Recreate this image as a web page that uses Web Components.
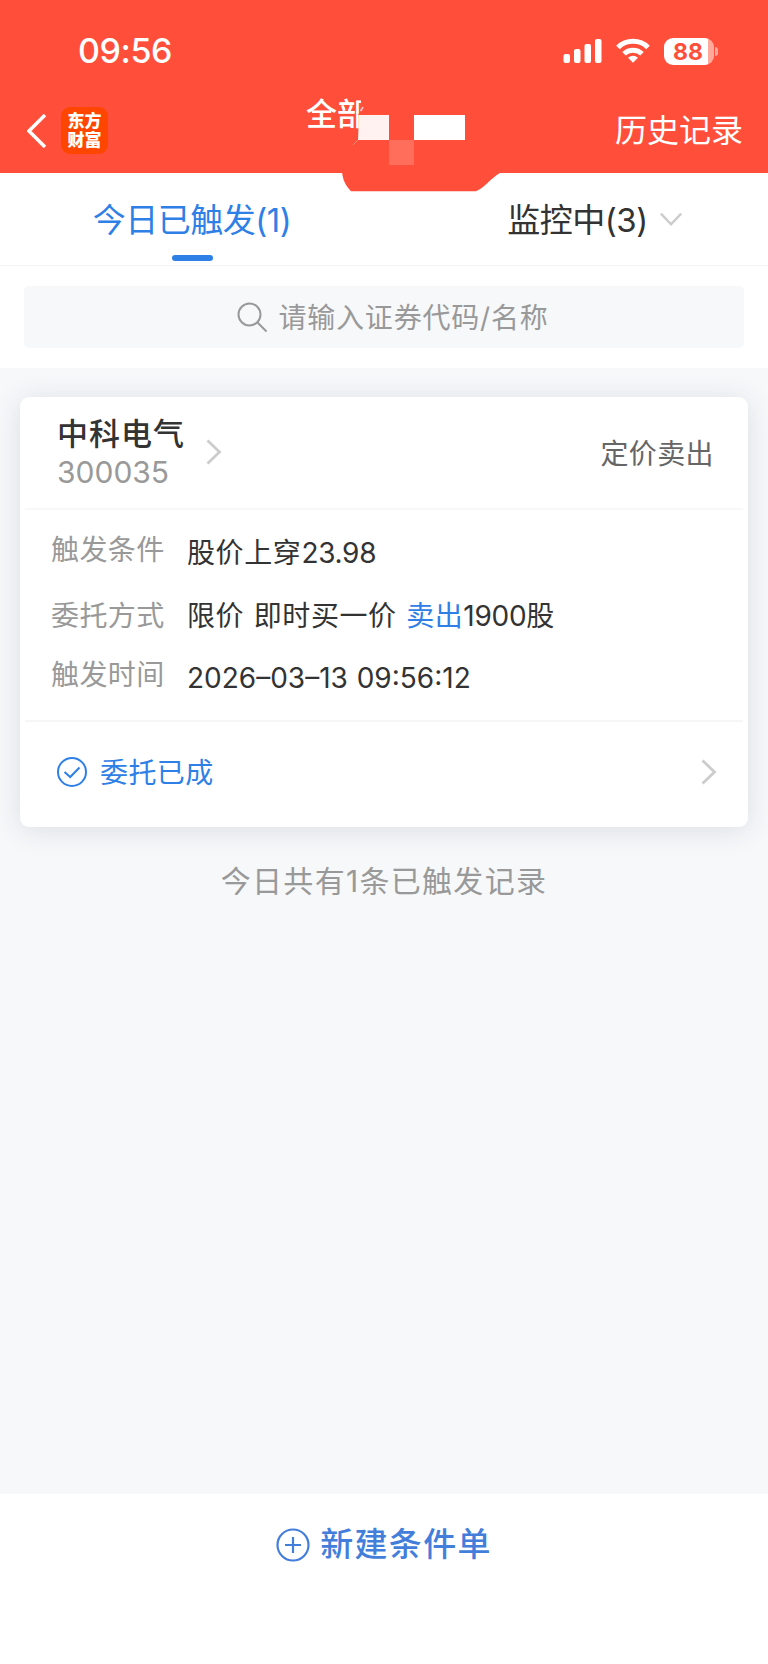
<!DOCTYPE html>
<html lang="zh-CN">
<head>
<meta charset="utf-8">
<meta name="viewport" content="width=device-width">
<title>条件单</title>
<style>
    body {
        margin: 0;
        background: #f7f8fa;
        font-family: Inter, "Noto Sans CJK SC", sans-serif;
        color: #333;
    }
</style>
</head>
<body>
<orders-page></orders-page>

<script>
(function () {
    function define(name, html) {
        const tmpl = document.createElement('template');
        tmpl.innerHTML = html;
        customElements.define(name, class extends HTMLElement {
            constructor() {
                super();
                this.attachShadow({mode: 'open'}).appendChild(tmpl.content.cloneNode(true));
            }
        });
    }

    define('status-bar', `
        <style>
            :host {
                display: flex;
                align-items: center;
                justify-content: space-between;
                height: 102px;
                padding: 0 50px 0 78px;
                box-sizing: border-box;
                color: #fff;
            }
            .time { font-size: 34px; font-weight: 500; line-height: 40px; letter-spacing: -0.4px; }
            .icons { display: flex; align-items: center; }
            .wifi { margin: 0 14px 0 13px; }
            .battery { display: flex; align-items: center; }
            .level {
                width: 50px;
                height: 27px;
                border-radius: 9px;
                background: linear-gradient(90deg, #fff 44px, #ffa89b 44px);
                color: #ff4f3a;
                font-size: 23px;
                font-weight: 700;
                line-height: 28px;
                text-indent: 9px;
            }
            .nub { width: 3px; height: 9px; margin-left: 1px; border-radius: 0 4px 4px 0; background: #ffa89b; }
        </style>
        <span class="time">09:56</span>
        <div class="icons">
            <svg width="40" height="26" viewBox="0 0 40 26" fill="#fff">
                <rect x="0.5" y="16" width="6.5" height="9" rx="2"/>
                <rect x="11" y="11" width="6.5" height="14" rx="2"/>
                <rect x="21.5" y="6" width="6.5" height="19" rx="2"/>
                <rect x="32" y="1" width="6.5" height="24" rx="2"/>
            </svg>
            <svg class="wifi" width="34" height="26" viewBox="0 0 34 26" fill="none" stroke="#fff" stroke-width="5">
                <path d="M2 9.5C10 1.3 24 1.3 32 9.5"/>
                <path d="M8 15.8C13 11 21 11 26 15.8"/>
                <path d="M17 24.7L12 19.7Q17 15.8 22 19.7Z" fill="#fff" stroke="none"/>
            </svg>
            <div class="battery"><div class="level">88</div><div class="nub"></div></div>
        </div>
    `);

    define('nav-bar', `
        <style>
            :host {
                display: grid;
                grid-template-columns: 27px 34px 245px 1fr auto;
                height: 71px;
                color: #fff;
            }
            .back { grid-column: 2; margin-top: 11px; }
            .logo {
                display: flex;
                flex-direction: column;
                align-items: center;
                justify-content: center;
                width: 47px;
                height: 47px;
                margin-top: 5px;
                border-radius: 9px;
                background: #ff4600;
                font: 900 17px/19px "Liberation Sans", "Noto Sans CJK SC", sans-serif;
            }
            .title { position: relative; font-size: 31px; font-weight: 500; line-height: 44px; margin-top: -10px; }
            /* mosaic over the account name, spills below the bar */
            .mosaic { position: absolute; left: 36px; top: 4px; }
            .action { margin: 5px 25px 0 0; font-size: 32px; line-height: 47px; }
        </style>
        <svg class="back" width="24" height="36" viewBox="0 0 24 36" fill="none" stroke="#fff" stroke-width="3.5">
            <path d="M18 2L2 18L18 34"/>
        </svg>
        <div class="logo"><div>东方</div><div>财富</div></div>
        <div class="title">全部
            <svg class="mosaic" width="170" height="96" viewBox="342 96 170 96">
                <path d="M361 96H373V115H358L361 110Z" fill="#ff4f3a"/>
                <path d="M342 172C343 181 346 186 351 191.300H476C484 188 490 179 500 173V172Z" fill="#ff4f3a"/>
                <path d="M359 115H389V140H358Z" fill="#fff2f1"/>
                <path d="M363 107L361 111" stroke="#ffd0c9" stroke-width="1.500"/>
                <rect x="389" y="140" width="25" height="25" fill="#ff6d5b"/>
                <path d="M414 115H465V140H414Z" fill="#fff"/>
                <path d="M353 145L358 140" stroke="#ff8a7c"/>
            </svg>
        </div>
        <div class="action"><slot></slot></div>
    `);

    define('tab-item', `
        <style>
            :host {
                position: relative;
                display: flex;
                justify-content: center;
                align-items: center;
                padding-top: 2px;
                font-size: 33px;
                line-height: 48px;
                letter-spacing: -0.5px;
                box-sizing: border-box;
            }
            :host([active]) { color: #2f80e6; }
            :host([active])::after {
                content: "";
                position: absolute;
                left: 172px;
                bottom: 4px;
                width: 41px;
                height: 6px;
                border-radius: 3px;
                background: #2f80e6;
            }
        </style>
        <slot></slot>
    `);

    define('search-box', `
        <style>
            :host {
                display: flex;
                justify-content: center;
                align-items: center;
                gap: 10px;
                height: 62px;
                padding: 2px 0 0 18px;
                box-sizing: border-box;
                border-radius: 5px;
                background: #f7f8fa;
                color: #999;
                font-size: 28px;
                line-height: 40px;
                letter-spacing: 0.8px;
            }
            svg { margin-top: -2px; }
        </style>
        <svg width="31" height="31" viewBox="0 0 31 31" fill="none" stroke="#999" stroke-width="2">
            <circle cx="12.500" cy="12.500" r="11"/><path d="M20.500 20.500L29.500 29.500"/>
        </svg>
        <span><slot></slot></span>
    `);

    define('arrow-icon', `
        <style>
            :host { display: block; line-height: 0; }
            :host([down]) { transform: rotate(90deg); }
        </style>
        <svg width="16" height="26" viewBox="0 0 16 26" fill="none" stroke="#ccc" stroke-width="2.800">
            <path d="M1.500 1.500L13.500 13L1.500 24.500"/>
        </svg>
    `);

    define('order-field', `
        <style>
            :host { display: flex; height: 40px; font-size: 28px; line-height: 40px; }
            .label { width: 136px; color: #999; letter-spacing: 0.4px; margin-top: var(--label-shift, 0); }
            .value { color: #333; white-space: pre; letter-spacing: 0.6px; word-spacing: 1px; }
            ::slotted(b) { color: #2f80e6; font-weight: 400; }
            ::slotted(i) { font-style: normal; letter-spacing: -0.3px; }
            ::slotted(time) { letter-spacing: 0; }
        </style>
        <span class="label"><slot name="label"></slot></span>
        <span class="value"><slot></slot></span>
    `);

    define('order-card', `
        <style>
            :host {
                display: block;
                margin: 29px 20px 0;
                padding: 0 5px;
                height: 430px;
                box-sizing: border-box;
                border-radius: 9px;
                background: #fff;
                box-shadow: 0 3px 28px rgba(40, 50, 70, .13);
            }
            .head {
                display: flex;
                align-items: center;
                height: 113px;
                padding: 0 29px 0 32px;
                box-sizing: border-box;
                border-bottom: 2px solid #f8f8f9;
            }
            .name { font-size: 31px; font-weight: 500; line-height: 40px; letter-spacing: 1px; margin-top: -1px; }
            .code { font-size: 30px; line-height: 36px; color: #999; }
            .head arrow-icon { margin: -2px auto 0 21px; }
            .kind { margin-top: -2px; font-size: 28px; color: #666; letter-spacing: 0.4px; }
            .fields {
                display: flex;
                flex-direction: column;
                gap: 22.5px;
                height: 212px;
                padding: 23px 0 0 26px;
                box-sizing: border-box;
                border-bottom: 2px solid #f6f6f7;
            }
            .foot { display: flex; align-items: center; height: 100px; padding: 0 26px 0 31px; font-size: 28px; color: #2f80e6; }
            .foot span { margin: -2px auto 0 12px; letter-spacing: 0.4px; }
        </style>
        <div class="head">
            <div>
                <div class="name"><slot name="name"></slot></div>
                <div class="code"><slot name="code"></slot></div>
            </div>
            <arrow-icon></arrow-icon>
            <span class="kind"><slot name="kind"></slot></span>
        </div>
        <div class="fields"><slot></slot></div>
        <div class="foot">
            <svg width="32" height="32" viewBox="0 0 32 32" fill="none" stroke="#2f80e6" stroke-width="2">
                <circle cx="16" cy="16" r="14"/><path d="M8.500 16L14.200 21L23.500 11.500"/>
            </svg>
            <span><slot name="state"></slot></span>
            <arrow-icon></arrow-icon>
        </div>
    `);

    define('new-order', `
        <style>
            :host {
                display: flex;
                justify-content: center;
                align-items: flex-start;
                gap: 10px;
                height: 170px;
                padding-top: 26px;
                box-sizing: border-box;
                background: #fff;
                color: #447edb;
                font-size: 33px;
                font-weight: 500;
                line-height: 48px;
                letter-spacing: 1.3px;
            }
            svg { margin-top: 8px; }
        </style>
        <svg width="34" height="34" viewBox="0 0 34 34" fill="none" stroke="#447edb" stroke-width="2.200">
            <circle cx="17" cy="17" r="15.500"/><path d="M9 17H25M17 9V25"/>
        </svg>
        <span><slot></slot></span>
    `);

    define('orders-page', `
        <style>
            :host { display: flex; flex-direction: column; height: 1664px; }
            header { position: relative; z-index: 1; height: 173px; background: #ff4f3a; }
            .tabs { display: grid; grid-template-columns: 1fr 1fr; height: 92px; background: #fff; border-bottom: 1px solid #f2f3f5; }
            .tabs tab-item:last-child { padding-left: 33px; }
            .tabs arrow-icon { margin: -2px 0 0 18px; zoom: .88; }
            .search { height: 102px; padding: 20px 24px; box-sizing: border-box; background: #fff; }
            .summary { margin-top: 32px; text-align: center; color: #999; font-size: 30px; line-height: 44px; letter-spacing: 1.3px; }
            new-order { margin-top: auto; }
            .first, .third { --label-shift: -3px; }
        </style>
        <header>
            <status-bar></status-bar>
            <nav-bar>历史记录</nav-bar>
        </header>
        <div class="tabs">
            <tab-item active>今日已触发(1)</tab-item>
            <tab-item>监控中(3)<arrow-icon down></arrow-icon></tab-item>
        </div>
        <div class="search"><search-box>请输入证券代码/名称</search-box></div>
        <order-card>
            <span slot="name">中科电气</span>
            <span slot="code">300035</span>
            <span slot="kind">定价卖出</span>
            <order-field class="first"><span slot="label">触发条件</span>股价上穿<i>23.98</i></order-field>
            <order-field><span slot="label">委托方式</span>限价 即时买一价 <b>卖出</b><i>1900</i>股</order-field>
            <order-field class="third"><span slot="label">触发时间</span><time>2026–03–13 09:56:12</time></order-field>
            <span slot="state">委托已成</span>
        </order-card>
        <div class="summary">今日共有1条已触发记录</div>
        <new-order>新建条件单</new-order>
    `);
})();
</script>
</body>
</html>
